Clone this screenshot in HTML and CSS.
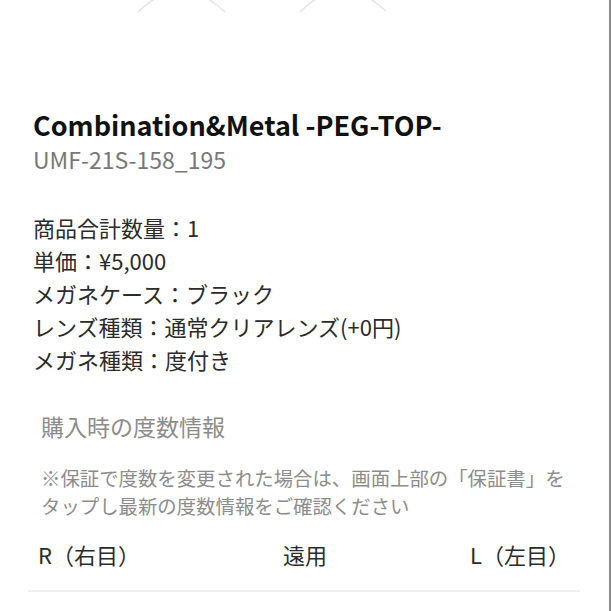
FILE: index.html
```html
<!DOCTYPE html>
<html lang="ja">
<head>
<meta charset="UTF-8">
<meta name="viewport" content="width=device-width, initial-scale=1.0">
<title>購入履歴詳細</title>
<link rel="stylesheet" href="styles.css">
</head>
<body>
<div class="page">
    <!-- bottom edge of the product photo, scrolled up -->
    <svg class="hero" width="611" height="14" viewBox="0 0 611 14">
        <path d="M138 12 Q181 -30 225 12" />
        <path d="M300 12 Q342 -30 386 11" />
    </svg>

    <div class="product">
        <h1 class="product-name">Combination&amp;Metal -PEG-TOP-</h1>
        <p class="product-code">UMF-21S-158_195</p>
    </div>

    <ul class="specs">
        <li>商品合計数量：1</li>
        <li>単価：¥5,000</li>
        <li>メガネケース：ブラック</li>
        <li>レンズ種類：通常クリアレンズ(+0円)</li>
        <li>メガネ種類：度付き</li>
    </ul>

    <div class="prescription">
        <h2 class="section-title">購入時の度数情報</h2>
        <p class="note">※保証で度数を変更された場合は、画面上部の「保証書」をタップし最新の度数情報をご確認ください</p>
    </div>

    <div class="eye-row">
        <span>R（右目）</span>
        <span>遠用</span>
        <span>L（左目）</span>
    </div>
    <div class="divider"></div>
</div>
</body>
</html>
```

FILE: styles.css
```css
:root {
    /* colors */
    --ink: #111111;
    --text: #2b2b2b;
    --sub: #777777;
    --muted: #8c8c8c;
    --line: #efefef;
    --edge: #8a8a8a;
    /* fonts */
    --Noto: "Noto Sans CJK JP", "Noto Sans", sans-serif;
}

body {
    margin: 0;
    background-color: #ffffff;
    font-family: var(--Noto);
}

.page {
    height: 100vh;
    border-right: 2px solid var(--edge);
    box-sizing: border-box;
    overflow: hidden;
}

.hero {
    display: block;
    overflow: visible;
}

.hero path {
    fill: none;
    stroke: #e4e4e4;
    stroke-width: 1.5;
}

.product {
    padding: 93px 0 0 33px;
}

.product-name {
    margin: 0;
    font-size: 27px;
    line-height: 35px;
    font-weight: bold;
    color: var(--ink);
}

.product-code {
    margin: 0;
    font-size: 23px;
    line-height: 34px;
    color: var(--sub);
}

.specs {
    list-style: none;
    margin: 35px 0 0;
    padding: 0 0 0 33px;
}

.specs li {
    font-size: 22px;
    line-height: 33px;
    color: var(--text);
}

.prescription {
    padding: 0 40px 0 41px;
}

.section-title {
    margin: 34px 0 0;
    font-size: 23px;
    line-height: 33px;
    font-weight: normal;
    color: var(--muted);
}

.note {
    margin: 21px 0 0;
    font-size: 19.4px;
    line-height: 28px;
    color: var(--muted);
}

.eye-row {
    display: grid;
    grid-template-columns: 245px 187px 1fr;
    margin-top: 18px;
    padding-left: 38px;
    font-size: 22px;
    line-height: 33px;
    color: var(--text);
}

.divider {
    height: 2px;
    margin: 19px 29px 0 28px;
    background-color: var(--line);
}
```
